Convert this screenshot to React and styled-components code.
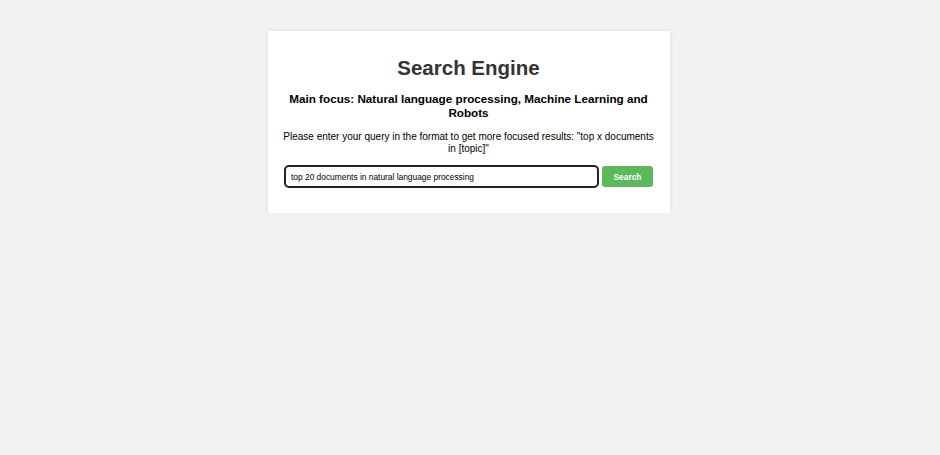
import React, { useEffect, useRef } from "react";
import styled, { createGlobalStyle } from "styled-components";

const Global = createGlobalStyle`
  html, body { margin: 0; padding: 0; background: #f2f2f2; }
  body { font-family: "Liberation Sans", Arial, sans-serif; }
`;

const Page = styled.div`
  display: flex;
  justify-content: center;
  padding: 31px 2px 0 0;
`;

const Card = styled.div`
  width: 402px;
  box-sizing: border-box;
  background: #fff;
  padding: 25px 17px 25px 16px;
  box-shadow: 0 0 4px rgba(0, 0, 0, 0.1);
  text-align: center;
`;

const Title = styled.h1`
  margin: 0 0 12px;
  font-size: 20.5px;
  line-height: 24px;
  font-weight: bold;
  color: #333;
`;

const Sub = styled.h2`
  margin: 0 0 11px;
  font-size: 11.7px;
  line-height: 14px;
  font-weight: bold;
  color: #000;
`;

const Info = styled.p`
  margin: 0 -4px 10px;
  font-size: 10px;
  line-height: 12px;
  color: #000;
`;

const Row = styled.form`
  display: flex;
  gap: 3px;
  align-items: center;
`;

const Input = styled.input`
  flex: 1;
  min-width: 0;
  height: 23px;
  box-sizing: border-box;
  border: 2px solid #222;
  border-radius: 5px;
  padding: 0 5px;
  font-family: "Liberation Sans", Arial, sans-serif;
  font-size: 8.4px;
  color: #000;
  caret-color: #000;
  outline: none;
`;

const Button = styled.button`
  flex: none;
  width: 51px;
  height: 21px;
  padding: 0;
  border: none;
  border-radius: 3px;
  background: #5cb85c;
  color: #fff;
  font-family: "Liberation Sans", Arial, sans-serif;
  font-size: 8.4px;
  font-weight: bold;
`;

export default function App() {
  const inputRef = useRef(null);
  useEffect(() => {
    const el = inputRef.current;
    if (el) {
      el.focus();
      const n = el.value.length;
      el.setSelectionRange(n, n);
    }
  }, []);
  return (
    <>
      <Global />
      <Page>
        <Card>
          <Title>Search Engine</Title>
          <Sub>Main focus: Natural language processing, Machine Learning and Robots</Sub>
          <Info>Please enter your query in the format to get more focused results: "top x documents in [topic]"</Info>
          <Row onSubmit={(e) => e.preventDefault()}>
            <Input ref={inputRef} defaultValue="top 20 documents in natural language processing" />
            <Button type="submit">Search</Button>
          </Row>
        </Card>
      </Page>
    </>
  );
}
